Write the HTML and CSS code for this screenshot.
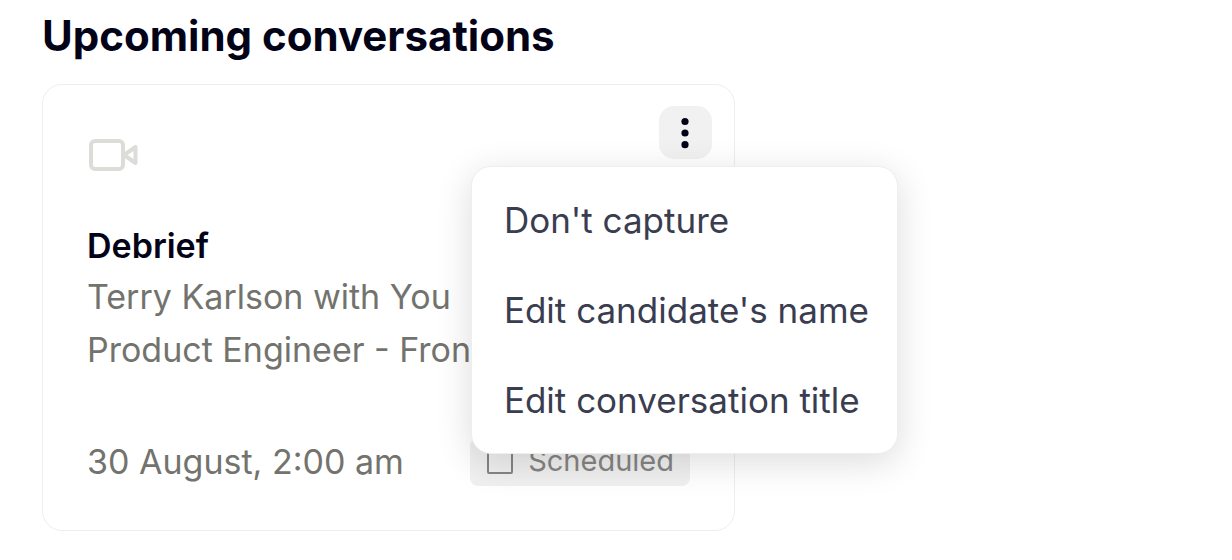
FILE: index.html
```html
<!DOCTYPE html>
<html lang="en">
<head>
<meta charset="utf-8">
<title>Upcoming conversations</title>
<link rel="stylesheet" href="styles.css">
</head>
<body>
<main class="page">
  <h1 class="heading">Upcoming conversations</h1>
  <article class="card">
    <svg class="camera" viewBox="0 0 52 34" aria-hidden="true">
      <rect x="4" y="3" width="32" height="28" rx="4"/>
      <path d="M37 17 L48.500 9 V25 Z"/>
    </svg>
    <h2 class="title">Debrief</h2>
    <p class="detail">Terry Karlson with You</p>
    <p class="detail">Product Engineer - Frontend</p>
    <footer class="footer">
      <time class="date">30 August, 2:00 am</time>
      <span class="status">
        <svg class="box" viewBox="0 0 28 28" aria-hidden="true"><rect x="2" y="2" width="24" height="24" rx="1"/></svg>
        Scheduled
      </span>
    </footer>
    <div class="actions">
      <button class="more" type="button" aria-label="More options" aria-expanded="true">
        <svg class="dots" viewBox="0 0 9 32" aria-hidden="true"><circle cx="4" cy="4.500" r="3.600"/><circle cx="4" cy="16" r="3.600"/><circle cx="4" cy="27.700" r="3.600"/></svg>
      </button>
      <div class="menu" role="menu">
        <button class="item" type="button" role="menuitem">Don't capture</button>
        <button class="item" type="button" role="menuitem">Edit candidate's name</button>
        <button class="item" type="button" role="menuitem">Edit conversation title</button>
      </div>
    </div>
  </article>
</main>
</body>
</html>
```
FILE: styles.css
```css
* { box-sizing: border-box; margin: 0; }
body { background: #fff; font-family: Inter, "Liberation Sans", sans-serif; }
.page { padding: 11px 42px 28px; }
.heading { font-size: 42px; line-height: 50px; font-weight: 700; color: #030318; margin-bottom: 23px; }
.card { position: relative; max-width: 693px; padding: 53px 44px 43px; border: 1px solid #eeeeed; border-radius: 20px; background: #fff; }
.camera { display: block; width: 52px; height: 34px; fill: none; stroke: #dcddd8; stroke-width: 4; stroke-linejoin: round; }
.title { margin-top: 50px; font-size: 34px; line-height: 48px; font-weight: 600; color: #030318; }
.detail { font-size: 34px; line-height: 53px; color: #73736e; white-space: nowrap; overflow: hidden; }
.footer { display: flex; align-items: center; justify-content: space-between; margin-top: 61px; }
.date { font-size: 34px; line-height: 50px; color: #73736e; }
.status { display: flex; align-items: center; gap: 14px; padding: 0 16px 2px; border-radius: 8px; background: #f0f0f0; color: #858583; font-size: 29px; line-height: 46px; }
.box { width: 28px; height: 28px; fill: none; stroke: #858583; stroke-width: 2; }
.actions { position: absolute; top: 21px; right: 22px; }
.more { display: flex; align-items: center; justify-content: center; width: 53px; height: 53px; padding: 0; border: 0; border-radius: 15px; background: #f1f1f1; }
.dots { width: 9px; height: 32px; fill: #030318; }
.menu { position: absolute; top: 60px; right: -186px; min-width: 426px; padding: 8px 0; border: 1px solid #eeeeed; border-radius: 20px; background: #fff; box-shadow: 0 8px 36px rgba(0,0,0,.14); }
.item { display: block; width: 100%; padding: 20px 28px 20px 32px; border: 0; background: none; color: #3a3d4f; font: 35px/50px Inter, "Liberation Sans", sans-serif; text-align: left; white-space: nowrap; }
```
